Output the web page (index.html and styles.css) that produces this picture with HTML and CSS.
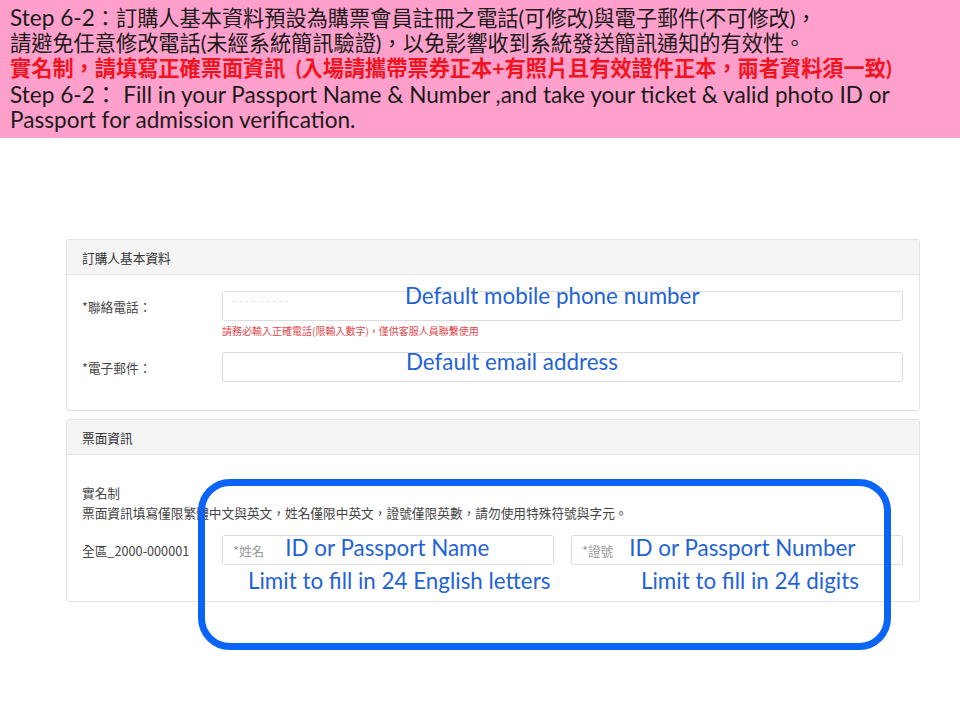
FILE: index.html
```html
<!DOCTYPE html>
<html lang="zh-Hant">
<head>
<meta charset="utf-8">
<title>Step 6-2</title>
<link rel="stylesheet" href="styles.css">
</head>
<body>
<header class="banner">
  <div class="line"><span class="en">Step 6-2</span>：訂購人基本資料預設為購票會員註冊之電話(可修改)與電子郵件(不可修改)，</div>
  <div class="line">請避免任意修改電話(未經系統簡訊驗證)，以免影響收到系統發送簡訊通知的有效性。</div>
  <div class="line red">實名制，請填寫正確票面資訊&nbsp; (入場請攜帶票券正本+有照片且有效證件正本，兩者資料須一致)</div>
  <div class="line"><span class="en">Step 6-2：&nbsp;Fill in your Passport Name &amp; Number ,and take your ticket &amp; valid photo ID or</span></div>
  <div class="line"><span class="en">Passport for admission verification.</span></div>
</header>

<main class="content">
  <section class="card">
    <div class="card-head">訂購人基本資料</div>
    <div class="card-body">
      <div class="row">
        <div class="label">*聯絡電話：</div>
        <div class="field">
          <div class="input">
            <span class="mask">- - - -&nbsp;&nbsp;- - - - -</span>
            <span class="note note-phone">Default mobile phone number</span>
          </div>
          <div class="help">請務必輸入正確電話(限輸入數字)，僅供客服人員聯繫使用</div>
        </div>
      </div>
      <div class="row row-email">
        <div class="label">*電子郵件：</div>
        <div class="field">
          <div class="input">
            <span class="note note-email">Default email address</span>
          </div>
        </div>
      </div>
    </div>
  </section>

  <section class="card card-ticket">
    <div class="card-head">票面資訊</div>
    <div class="card-body ticket-body">
      <div class="realname">實名制<br>票面資訊填寫僅限繁體中文與英文，姓名僅限中英文，證號僅限英數，請勿使用特殊符號與字元。</div>
      <div class="row ticket-row">
        <div class="label">全區_2000-000001</div>
        <div class="pair">
          <div class="col">
            <div class="input"><span class="ph">*姓名</span><span class="note note-name">ID or Passport Name</span></div>
            <div class="limit limit-name">Limit to fill in 24 English letters</div>
          </div>
          <div class="col">
            <div class="input"><span class="ph">*證號</span><span class="note note-id">ID or Passport Number</span></div>
            <div class="limit limit-id">Limit to fill in 24 digits</div>
          </div>
        </div>
      </div>
    </div>
  </section>

  <div class="callout"></div>
</main>
</body>
</html>
```

FILE: styles.css
```css
* { box-sizing: border-box; }

html, body {
  margin: 0;
  padding: 0;
  background: #ffffff;
}

body {
  font-family: "Lato", "Noto Sans CJK TC", sans-serif;
  color: #111;
  width: 960px;
  height: 720px;
  overflow: hidden;
}

.banner {
  background: #ff9fcb;
  height: 138px;
  padding: 5px 10px 0 10px;
  font-size: 21.2px;
  line-height: 25.5px;
  color: #1a1a1a;
}

.line {
  white-space: nowrap;
  height: 25.5px;
}

.en {
  font-size: 22.6px;
}

.red {
  color: #f0141e;
  font-weight: 700;
}

.content {
  position: relative;
  padding: 101px 40px 0 66px;
  font-family: "Noto Sans CJK TC", "Lato", sans-serif;
  font-size: 12.7px;
  color: #333;
}

.card {
  width: 854px;
  border: 1px solid #e2e2e2;
  border-radius: 3px;
  background: #fff;
}

.card-ticket {
  margin-top: 8px;
}

.card-head {
  height: 35px;
  background: #f5f5f5;
  border-bottom: 1px solid #e2e2e2;
  padding-left: 15px;
  display: flex;
  align-items: center;
  color: #333;
}

.card-body {
  padding: 16px 16px 28px 15px;
}

.row {
  display: flex;
  align-items: flex-start;
}

.label {
  width: 140px;
  flex: none;
  height: 30px;
  display: flex;
  align-items: center;
  color: #444;
}

.field {
  flex: 1;
}

.input {
  height: 30px;
  border: 1px solid #dcdcdc;
  border-radius: 3px;
  display: flex;
  align-items: center;
  padding-left: 10px;
  background: #fff;
  white-space: nowrap;
}

.mask {
  width: 172px;
  flex: none;
  font-size: 9px;
  color: #d0d0d0;
  align-self: flex-start;
  margin-top: 2px;
  letter-spacing: 0.5px;
}

.note {
  font-family: "Lato", sans-serif;
  font-size: 22.4px;
  color: #1f63d6;
  line-height: 24px;
}

.note-phone {
  align-self: flex-start;
  margin-top: -8px;
}

.note-email {
  margin-left: 173px;
  margin-top: -10px;
}

.help {
  font-size: 10px;
  line-height: 14px;
  margin-top: 3px;
  color: #e0474c;
}

.row-email {
  margin-top: 14px;
}

.ticket-body {
  padding-top: 28px;
  padding-bottom: 0;
}

.realname {
  line-height: 20px;
  color: #444;
}

.ticket-row {
  margin-top: 12px;
}

.pair {
  flex: 1;
  display: flex;
  gap: 17px;
}

.col {
  flex: 1;
}

.ph {
  color: #999;
  flex: none;
}

.note-name {
  margin-left: 21px;
  margin-top: -4px;
}

.note-id {
  margin-left: 16px;
  margin-top: -4px;
}

.limit {
  font-family: "Lato", sans-serif;
  font-size: 22.4px;
  line-height: 24px;
  color: #1f63d6;
  margin-top: 4px;
  height: 32px;
  white-space: nowrap;
}

.limit-name {
  padding-left: 26px;
}

.limit-id {
  padding-left: 70px;
}

.callout {
  position: absolute;
  left: 198px;
  top: 341px;
  width: 693px;
  height: 171px;
  border: 7px solid #0a64f5;
  border-radius: 32px;
}
```
